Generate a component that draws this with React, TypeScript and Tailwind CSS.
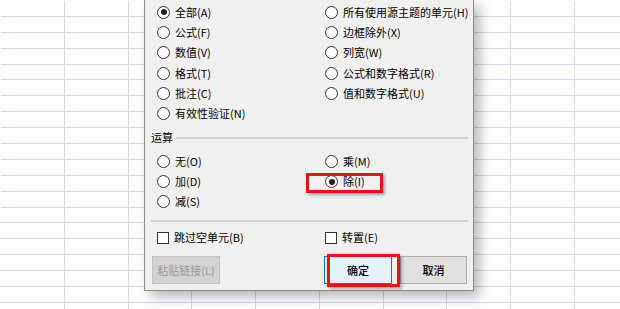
import React from 'react';

const cells = Array.from({ length: 200 }, (_, i) => i);

function Radio({ label, checked = false }: { label: string; checked?: boolean }) {
    return (
        <div className="flex items-center h-[20px]">
            <span className="w-[13px] h-[13px] rounded-full border border-[#333] bg-white flex items-center justify-center shrink-0">
                {checked && <span className="w-[6px] h-[6px] rounded-full bg-[#222]" />}
            </span>
            <span className="ml-[5px] text-[11px] leading-none text-black whitespace-nowrap">{label}</span>
        </div>
    );
}

function Check({ label }: { label: string }) {
    return (
        <div className="flex items-center h-[20px]">
            <span className="w-[12px] h-[12px] border border-[#333] bg-white shrink-0" />
            <span className="ml-[5px] text-[11px] leading-none text-black whitespace-nowrap">{label}</span>
        </div>
    );
}

export default function App() {
    return (
        <div className="relative w-[620px] h-[309px] overflow-hidden bg-white font-['Noto_Sans_CJK_SC',sans-serif]">
            {/* sheet grid */}
            <div className="grid grid-cols-[repeat(10,63.75px)] auto-rows-[15.9px] pl-[1px] pt-[1px]">
                {cells.map((c) => (
                    <div key={c} className="border-r border-b border-[#d3d7e6]" />
                ))}
            </div>

            {/* paste special dialog */}
            <div className="absolute left-[144px] top-0 w-[330px] h-[291px] bg-[#f0f0f0] border-l border-r border-b border-[#8c8c8c] shadow-[6px_6px_12px_rgba(0,0,0,0.28)] flex flex-col">
                <div className="flex pt-[2px] pl-[12px]">
                    <div className="w-[168px] shrink-0 flex flex-col [&>div]:h-[20.3px]">
                        <Radio label="全部(A)" checked />
                        <Radio label="公式(F)" />
                        <Radio label="数值(V)" />
                        <Radio label="格式(T)" />
                        <Radio label="批注(C)" />
                        <Radio label="有效性验证(N)" />
                    </div>
                    <div className="flex flex-col [&>div]:h-[20.3px]">
                        <Radio label="所有使用源主题的单元(H)" />
                        <Radio label="边框除外(X)" />
                        <Radio label="列宽(W)" />
                        <Radio label="公式和数字格式(R)" />
                        <Radio label="值和数字格式(U)" />
                    </div>
                </div>

                <div className="flex items-center mt-[6px] pl-[6px] pr-[5px] h-[16px]">
                    <span className="text-[11px] leading-none text-black">运算</span>
                    <div className="flex-1 ml-[3px] h-[2px] bg-[#d2d2d2]" />
                </div>

                <div className="flex mt-[6px] pl-[12px]">
                    <div className="w-[168px] shrink-0 flex flex-col">
                        <Radio label="无(O)" />
                        <Radio label="加(D)" />
                        <Radio label="减(S)" />
                    </div>
                    <div className="flex flex-col">
                        <Radio label="乘(M)" />
                        <Radio label="除(I)" checked />
                    </div>
                </div>

                <div className="mt-[8px] ml-[6px] mr-[5px] h-[2px] bg-[#d2d2d2]" />

                <div className="flex mt-[6px] pl-[12px]">
                    <div className="w-[168px] shrink-0">
                        <Check label="跳过空单元(B)" />
                    </div>
                    <Check label="转置(E)" />
                </div>

                <div className="flex justify-between mt-[8px] pl-[7px] pr-[6px]">
                    <div className="w-[68px] h-[28px] bg-[#d2d2d2] border border-[#c4c4c4] flex items-center justify-center text-[11px] text-[#9a9a9a]">
                        粘贴链接(L)
                    </div>
                    <div className="flex gap-[8px]">
                        <div className="w-[68px] h-[28px] bg-[#e5f1fb] border border-[#0078d7] flex items-center justify-center text-[11px] font-medium text-black">
                            确定
                        </div>
                        <div className="w-[67px] h-[28px] bg-[#e1e1e1] border border-[#adadad] flex items-center justify-center text-[11px] font-medium text-black">
                            取消
                        </div>
                    </div>
                </div>
            </div>

            {/* annotation boxes */}
            <div className="absolute left-[306px] top-[173px] w-[77px] h-[20px] border-[3px] border-[#f01010] shadow-[2px_2px_3px_rgba(0,0,0,0.3)]" />
            <div className="absolute left-[327px] top-[254px] w-[73px] h-[33px] border-[3px] border-[#f01010] shadow-[2px_2px_3px_rgba(0,0,0,0.3)]" />
        </div>
    );
}
